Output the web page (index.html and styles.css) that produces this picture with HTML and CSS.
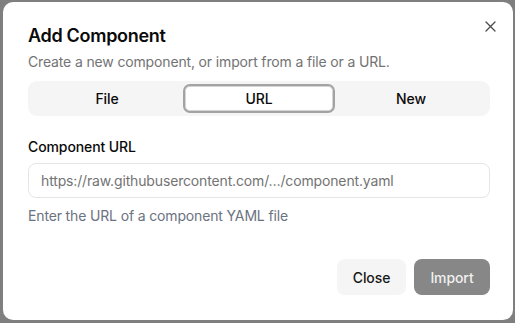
FILE: index.html
```html
<!DOCTYPE html>
<html>
<head>
<meta charset="utf-8">
<link rel="stylesheet" href="styles.css">
</head>
<body>
<div class="dialog">
  <button class="close-x" aria-label="Close">
    <svg width="11" height="11" viewBox="0 0 11 11"><path d="M1 1L10 10M10 1L1 10" stroke="#4a4a4a" stroke-width="1.3" stroke-linecap="round"/></svg>
  </button>
  <h2 class="title">Add Component</h2>
  <p class="subtitle">Create a new component, or import from a file or a URL.</p>
  <div class="tabs">
    <div class="tab">File</div>
    <div class="tab active">URL</div>
    <div class="tab">New</div>
  </div>
  <label class="label">Component URL</label>
  <div class="input">https://raw.githubusercontent.com/…/component.yaml</div>
  <p class="help">Enter the URL of a component YAML file</p>
  <div class="actions">
    <button class="btn secondary">Close</button>
    <button class="btn primary">Import</button>
  </div>
</div>
</body>
</html>
```
FILE: styles.css
```css
html, body {
  margin: 0;
  padding: 0;
  width: 515px;
  height: 323px;
  overflow: hidden;
}
body {
  background: #7f7f7f;
  font-family: Inter, "Noto Sans", sans-serif;
  color: #0a0a0a;
  padding: 2px 2px 3px 3px;
  box-sizing: border-box;
}
.dialog {
  position: relative;
  background: #fff;
  border-radius: 10px;
  height: 318px;
  box-sizing: border-box;
  padding: 20px 23px 0 25px;
  display: flex;
  flex-direction: column;
}
.close-x {
  position: absolute;
  top: 19px;
  right: 17px;
  border: 0;
  background: none;
  padding: 0;
  width: 11px;
  height: 11px;
  display: flex;
}
.title {
  margin: 0;
  font-size: 18px;
  line-height: 28px;
  font-weight: 600;
  letter-spacing: -0.3px;
}
.subtitle {
  margin: 2px 0 0;
  font-size: 14px;
  line-height: 20px;
  color: #737373;
  letter-spacing: -0.15px;
}
.tabs {
  margin-top: 9px;
  height: 35px;
  background: #f5f5f5;
  border-radius: 9px;
  display: grid;
  grid-template-columns: 1fr 1fr 1fr;
  padding: 3px;
  box-sizing: border-box;
}
.tab {
  display: flex;
  align-items: center;
  justify-content: center;
  font-size: 14px;
  font-weight: 500;
  border-radius: 7px;
  letter-spacing: -0.1px;
}
.tab.active {
  background: #fff;
  border: 2px solid #a3a3a3;
  box-shadow: inset 0 0 0 1px #d4d4d4;
}
.label {
  margin-top: 21px;
  font-size: 14px;
  line-height: 20px;
  font-weight: 500;
  letter-spacing: -0.1px;
}
.input {
  margin-top: 6px;
  height: 35px;
  border: 1px solid #e5e5e5;
  border-radius: 8px;
  box-sizing: border-box;
  padding: 0 12px;
  display: flex;
  align-items: center;
  font-size: 14px;
  color: #737373;
  letter-spacing: -0.15px;
}
.help {
  margin: 8px 0 0;
  font-size: 14px;
  line-height: 20px;
  color: #6b7280;
  letter-spacing: -0.15px;
}
.actions {
  margin-top: 33px;
  display: flex;
  justify-content: flex-end;
  gap: 8px;
}
.btn {
  height: 36px;
  border: 0;
  border-radius: 8px;
  font-family: inherit;
  font-size: 14px;
  font-weight: 500;
  padding: 0;
  letter-spacing: -0.1px;
}
.btn.secondary {
  background: #f5f5f5;
  color: #171717;
  width: 69px;
}
.btn.primary {
  background: #878787;
  color: #f0f0f0;
  width: 76px;
}
```
